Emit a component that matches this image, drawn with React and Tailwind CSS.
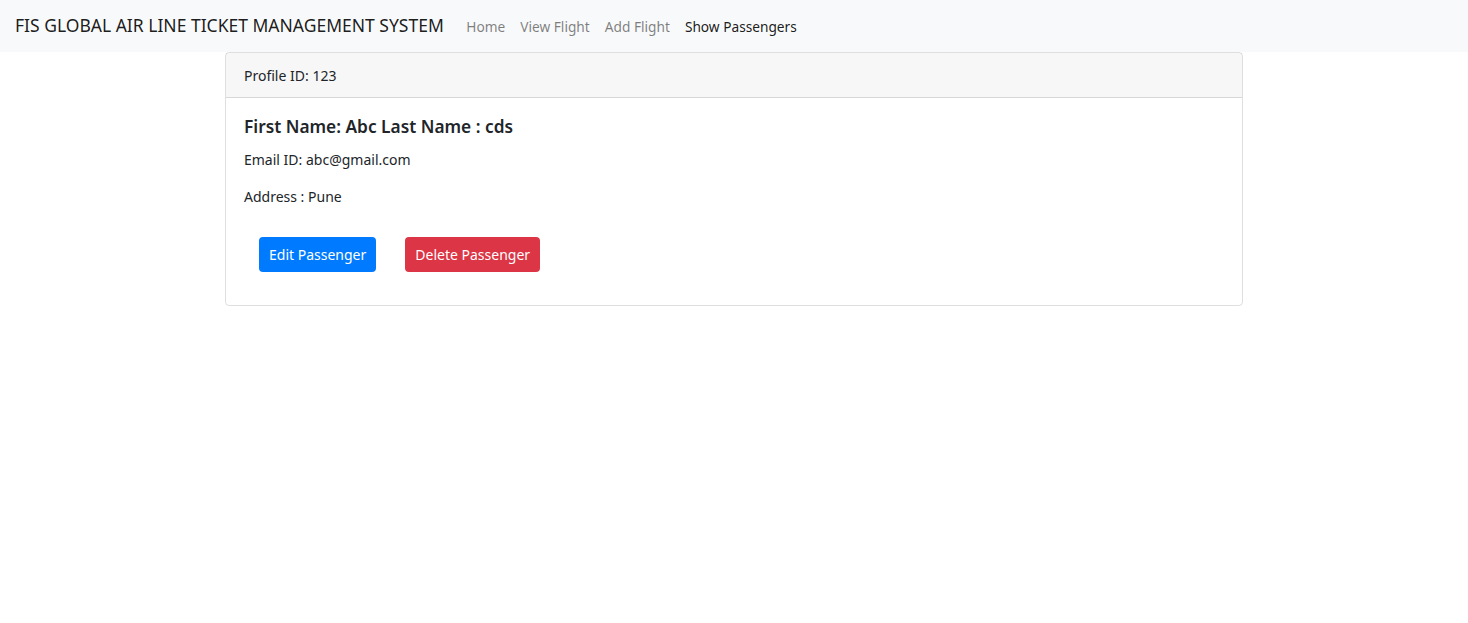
import React from 'react';

const NAV_LINKS = [
  { label: 'Home', active: false },
  { label: 'View Flight', active: false },
  { label: 'Add Flight', active: false },
  { label: 'Show Passengers', active: true },
];

const passenger = { id: 123, firstName: 'Abc', lastName: 'cds', email: 'abc@gmail.com', address: 'Pune' };

export default function App() {
  return (
    <div className="min-h-screen w-full bg-white text-[#212529]" style={{ fontFamily: '"Noto Sans", "Open Sans", sans-serif' }}>
      <nav className="flex h-[52px] items-center bg-[#f8f9fa] px-[15px]">
        <a className="mr-[15px] text-[17.5px] leading-none text-[rgba(0,0,0,0.9)]">FIS GLOBAL AIR LINE TICKET MANAGEMENT SYSTEM</a>
        <ul className="flex items-center">
          {NAV_LINKS.map(link => (
            <li key={link.label}>
              <a className={`px-[7.5px] text-[13.7px] ${link.active ? 'text-[rgba(0,0,0,0.9)]' : 'text-[rgba(0,0,0,0.5)]'}`}>{link.label}</a>
            </li>
          ))}
        </ul>
      </nav>

      <div className="mx-auto w-[1018px] rounded-[4px] border border-[rgba(0,0,0,0.125)]">
        <div className="flex h-[45px] items-center border-b border-[rgba(0,0,0,0.125)] bg-[rgba(0,0,0,0.03)] px-[18px] text-[14px]">
          Profile ID: {passenger.id}
        </div>
        <div className="p-[18px]">
          <h5 className="mb-[11px] text-[17.3px] font-semibold leading-[22px]">
            First Name: {passenger.firstName} Last Name : {passenger.lastName}
          </h5>
          <p className="mb-[15px] text-[14px] leading-[22px]">Email ID: {passenger.email}</p>
          <p className="mb-[15px] text-[14px] leading-[22px]">Address : {passenger.address}</p>
          <div className="flex">
            <button className="mx-[15px] mt-[14px] mb-[15px] h-[35px] rounded-[4px] bg-[#007bff] px-[10px] text-[14px] text-white">Edit Passenger</button>
            <button className="mr-[15px] ml-[14px] mt-[14px] mb-[15px] h-[35px] rounded-[4px] bg-[#dc3545] px-[10px] text-[14px] text-white">Delete Passenger</button>
          </div>
        </div>
      </div>
    </div>
  );
}
